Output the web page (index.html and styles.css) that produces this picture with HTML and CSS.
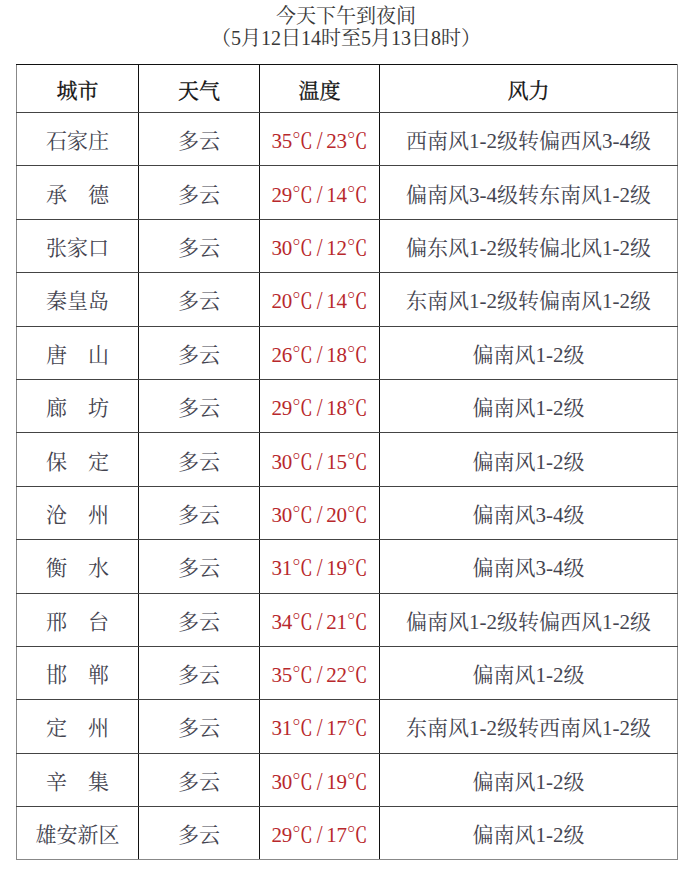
FILE: index.html
```html
<!DOCTYPE html>
<html lang="zh-CN">
<head>
<meta charset="utf-8">
<title>今天下午到夜间</title>
<link rel="stylesheet" href="styles.css">
</head>
<body>
<div class="page">
  <div class="title">
    <div class="t1">今天下午到夜间</div>
    <div class="t2">（5月12日14时至5月13日8时）</div>
  </div>
  <table class="wx">
    <colgroup>
      <col class="c-city"><col class="c-sky"><col class="c-temp"><col class="c-wind">
    </colgroup>
    <thead>
      <tr class="head"><th>城市</th><th>天气</th><th>温度</th><th>风力</th></tr>
    </thead>
    <tbody>
      <tr><td>石家庄</td><td>多云</td><td class="temp">35℃<span class="sl">/</span>23℃</td><td>西南风1-2级转偏西风3-4级</td></tr>
      <tr><td>承　德</td><td>多云</td><td class="temp">29℃<span class="sl">/</span>14℃</td><td>偏南风3-4级转东南风1-2级</td></tr>
      <tr><td>张家口</td><td>多云</td><td class="temp">30℃<span class="sl">/</span>12℃</td><td>偏东风1-2级转偏北风1-2级</td></tr>
      <tr><td>秦皇岛</td><td>多云</td><td class="temp">20℃<span class="sl">/</span>14℃</td><td>东南风1-2级转偏南风1-2级</td></tr>
      <tr><td>唐　山</td><td>多云</td><td class="temp">26℃<span class="sl">/</span>18℃</td><td>偏南风1-2级</td></tr>
      <tr><td>廊　坊</td><td>多云</td><td class="temp">29℃<span class="sl">/</span>18℃</td><td>偏南风1-2级</td></tr>
      <tr><td>保　定</td><td>多云</td><td class="temp">30℃<span class="sl">/</span>15℃</td><td>偏南风1-2级</td></tr>
      <tr><td>沧　州</td><td>多云</td><td class="temp">30℃<span class="sl">/</span>20℃</td><td>偏南风3-4级</td></tr>
      <tr><td>衡　水</td><td>多云</td><td class="temp">31℃<span class="sl">/</span>19℃</td><td>偏南风3-4级</td></tr>
      <tr><td>邢　台</td><td>多云</td><td class="temp">34℃<span class="sl">/</span>21℃</td><td>偏南风1-2级转偏西风1-2级</td></tr>
      <tr><td>邯　郸</td><td>多云</td><td class="temp">35℃<span class="sl">/</span>22℃</td><td>偏南风1-2级</td></tr>
      <tr><td>定　州</td><td>多云</td><td class="temp">31℃<span class="sl">/</span>17℃</td><td>东南风1-2级转西南风1-2级</td></tr>
      <tr><td>辛　集</td><td>多云</td><td class="temp">30℃<span class="sl">/</span>19℃</td><td>偏南风1-2级</td></tr>
      <tr><td>雄安新区</td><td>多云</td><td class="temp">29℃<span class="sl">/</span>17℃</td><td>偏南风1-2级</td></tr>
    </tbody>
  </table>
</div>
</body>
</html>
```
FILE: styles.css
```css
html, body {
  margin: 0;
  padding: 0;
  background: #ffffff;
}
body {
  font-family: "Liberation Serif", "Noto Serif CJK SC", "Noto Sans CJK SC", serif;
  color: #444450;
}
.page {
  width: 690px;
  padding-top: 5px;
}
.title {
  text-align: center;
  font-size: 20px;
  line-height: 22px;
  color: #383838;
  margin-left: 2px;
}
.wx {
  margin: 15px 0 0 16px;
  width: 661px;
  border-collapse: collapse;
  table-layout: fixed;
  font-size: 21px;
}
.c-city { width: 122px; }
.c-sky { width: 121px; }
.c-temp { width: 120px; }
.c-wind { width: 298px; }
.wx th, .wx td {
  padding: 0;
  text-align: center;
  white-space: nowrap;
  border-top: 1px solid #444;
  border-bottom: 1px solid #444;
  border-left: 1.5px solid #111;
  border-right: 1.5px solid #111;
}
.wx tr > :first-child { border-left: 1px solid #888; }
.wx tr > :last-child { border-right: 1px solid #888; }
.wx thead th {
  border-top: 1.5px solid #111;
  height: 47px;
  font-weight: normal;
  color: #111;
  -webkit-text-stroke: 0.3px #111;
}
.wx tbody td {
  height: 52.4px;
}
.wx tbody tr:last-child td { border-bottom: 1px solid #888; }
.temp {
  color: #b8282c;
  letter-spacing: -0.3px;
}
.sl {
  display: inline-block;
  margin: 0 4px;
  transform: scaleY(1.15);
}
```
